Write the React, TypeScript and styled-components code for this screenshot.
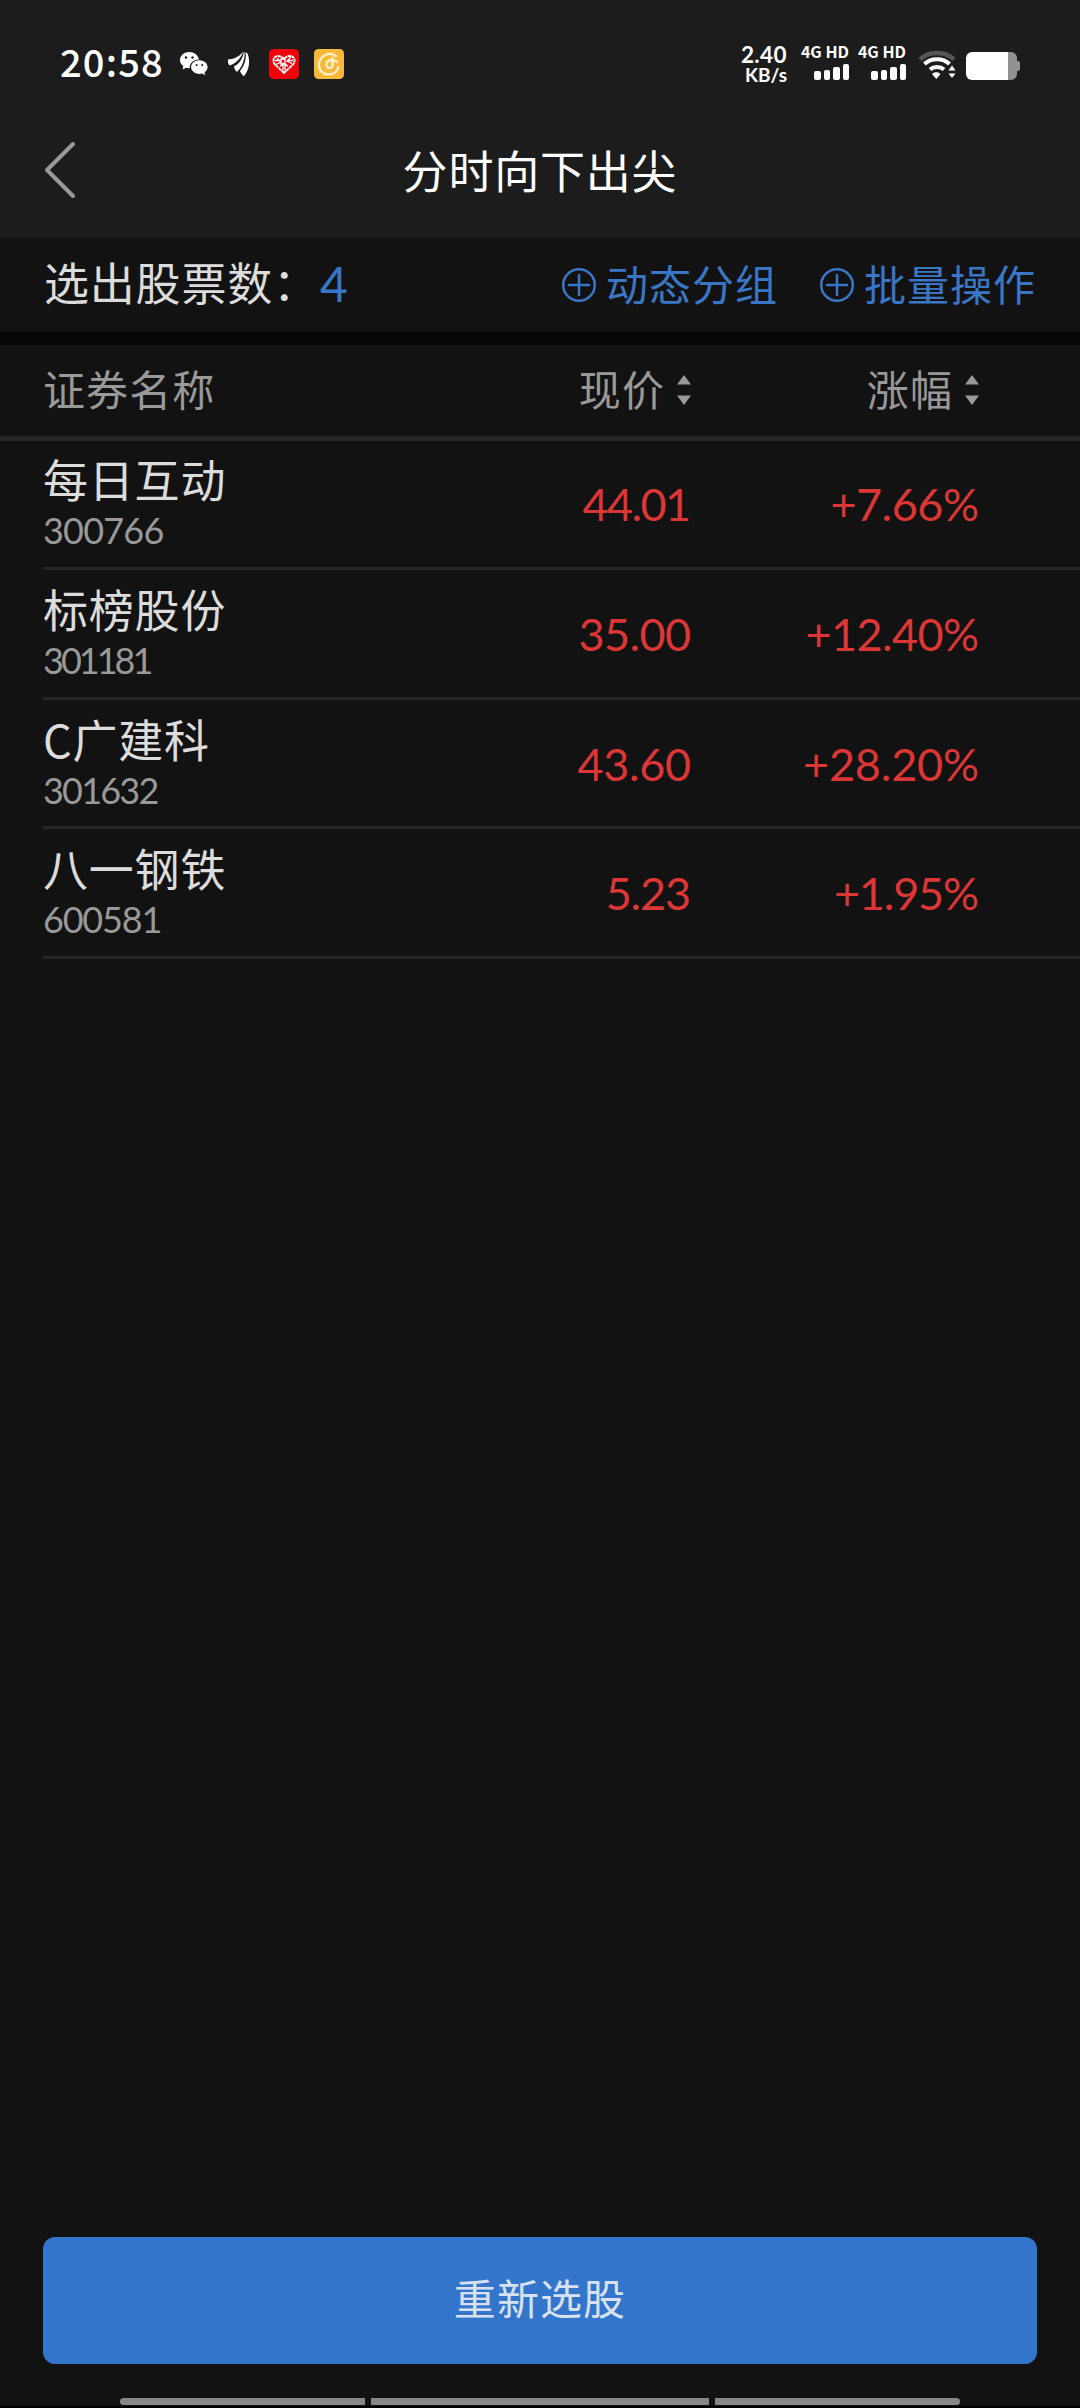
import React from "react";
import styled, { createGlobalStyle } from "styled-components";

const cjk = `"Noto Sans CJK SC", "Noto Sans", sans-serif`;
const latin = `Lato, "Noto Sans CJK SC", sans-serif`;

const Global = createGlobalStyle`
  * { box-sizing: border-box; }
  html, body { margin: 0; background: #121212; }
`;

const Screen = styled.div`
  width: 1080px;
  height: 2408px;
  display: flex;
  flex-direction: column;
  overflow: hidden;
  background: #121212;
  border-bottom: 2px solid #000;
  font-family: ${cjk};
  color: #dcdcdc;
`;

const StatusBar = styled.header`
  height: 110px;
  flex: none;
  display: flex;
  justify-content: space-between;
  padding: 0 60px;
  background: #1c1c1c;
  color: #fff;
`;

const StatusGroup = styled.div`
  display: flex;
  align-items: flex-start;
`;

const Clock = styled.div`
  width: 119px;
  padding-top: 38px;
  font-size: 38px;
  line-height: 46px;
  font-weight: 500;
  letter-spacing: 1.2px;
  white-space: nowrap;
`;

const StatusIcon = styled.svg<{ $w: number; $h: number; $top: number; $gap?: number }>`
  display: block;
  flex: none;
  width: ${(p) => p.$w}px;
  height: ${(p) => p.$h}px;
  margin-top: ${(p) => p.$top}px;
  margin-left: ${(p) => p.$gap ?? 0}px;
`;

const Speed = styled.div`
  padding-top: 44px;
  width: 50px;
  display: flex;
  flex-direction: column;
  align-items: flex-end;
  font-family: ${latin};
  font-weight: 700;
`;

const SpeedValue = styled.span`
  font-size: 22.5px;
  line-height: 21px;
  letter-spacing: 0.4px;
`;

const SpeedUnit = styled.span`
  font-size: 19px;
  line-height: 20px;
`;

const Signal = styled.div<{ $gap: number }>`
  display: flex;
  flex-direction: column;
  align-items: flex-end;
  width: 48px;
  margin-left: ${(p) => p.$gap}px;
  padding-top: 43px;
  font-size: 16px;
  line-height: 17px;
  font-weight: 700;
  white-space: nowrap;
`;

const Bars = styled.div`
  display: flex;
  align-items: flex-end;
  gap: 3.2px;
  height: 20px;
`;

const Bar = styled.i<{ $h: number }>`
  width: 6.3px;
  height: ${(p) => p.$h}px;
  border-radius: 2px;
  background: #fff;
`;

const TitleBar = styled.div`
  height: 128px;
  flex: none;
  display: grid;
  grid-template-columns: 120px 1fr 120px;
  background: #1c1c1c;
`;

const BackButton = styled.button`
  padding: 30px 0 0 43px;
  border: 0;
  background: none;
  display: flex;
  align-items: flex-start;
`;

const Title = styled.h1`
  margin: 0;
  padding-top: 27px;
  text-align: center;
  font-size: 45px;
  line-height: 66px;
  font-weight: 400;
  letter-spacing: 0.8px;
  color: #fff;
`;

const Summary = styled.section`
  height: 107px;
  flex: none;
  display: flex;
  align-items: flex-start;
  padding: 11px 44px 0 44px;
  border-bottom: 13px solid #070707;
`;

const CountLabel = styled.span`
  font-size: 45px;
  line-height: 66px;
  letter-spacing: 0.8px;
  width: 276px;
  white-space: nowrap;
`;

const Count = styled.span`
  flex: 1;
  font-family: ${latin};
  font-size: 48px;
  line-height: 70px;
  color: #3a76c6;
`;

const Action = styled.button`
  display: flex;
  align-items: center;
  gap: 9px;
  height: 66px;
  margin: 1px 0 0 41px;
  padding: 0;
  border: 0;
  background: none;
  font-family: ${cjk};
  font-size: 42px;
  line-height: 66px;
  letter-spacing: 1px;
  white-space: nowrap;
  color: #3a76c6;

  svg {
    margin-top: 3px;
  }
`;

const columns = `
  display: grid;
  grid-template-columns: 450px 198px 288px;
  padding-left: 43px;
`;

const TableHead = styled.div`
  ${columns}
  height: 96px;
  flex: none;
  border-bottom: 5px solid #262626;
  font-size: 42px;
  line-height: 64px;
  letter-spacing: 1.1px;
  color: #999;
`;

const HeadCell = styled.div<{ $sort?: boolean }>`
  display: flex;
  align-items: center;
  justify-content: ${(p) => (p.$sort ? "flex-end" : "flex-start")};
  gap: 12px;
  height: 86px;

  svg {
    margin-top: 4px;
  }
`;

const Row = styled.div<{ $h: number; $top: number }>`
  ${columns}
  padding-left: 0;
  padding-top: ${(p) => p.$top}px;
  margin-left: 43px;
  height: ${(p) => p.$h}px;
  flex: none;
  border-bottom: 3px solid #262626;
`;

const Stock = styled.div`
  display: flex;
  flex-direction: column;
`;

const Name = styled.span`
  font-size: 45px;
  line-height: 66px;
  letter-spacing: 0.8px;
`;

const Code = styled.span<{ $track: number }>`
  font-family: ${latin};
  font-size: 36px;
  line-height: 36px;
  letter-spacing: ${(p) => p.$track}px;
  color: #999;
`;

const Figure = styled.span<{ $track: number }>`
  text-align: right;
  padding-top: 30px;
  font-family: ${latin};
  font-size: 45px;
  line-height: 56px;
  letter-spacing: ${(p) => p.$track}px;
  margin-right: ${(p) => -p.$track}px;
  color: #dc3636;
`;

const Footer = styled.footer`
  margin-top: auto;
  padding: 0 43px;
`;

const Primary = styled.button`
  display: block;
  width: 994px;
  height: 127px;
  padding: 0 0 8px;
  border: 0;
  border-radius: 12px;
  background: #3375cb;
  color: #d7e1ef;
  font-family: ${cjk};
  font-size: 42px;
  letter-spacing: 1.1px;
`;

const Gestures = styled.div`
  display: grid;
  grid-template-columns: 245px 338px 245px;
  gap: 6px;
  margin: 34px 77px 1px;
`;

const Pill = styled.i<{ $side?: "left" | "right" }>`
  height: 7px;
  background: #878787;
  border-radius: ${(p) => (p.$side === "left" ? "4px 0 0 4px" : p.$side === "right" ? "0 4px 4px 0" : "0")};
`;

const PlusCircle = () => (
  <svg width="36" height="36" viewBox="0 0 36 36" fill="none" stroke="#3a76c6" strokeWidth="2.5">
    <circle cx="18" cy="18" r="15.8" />
    <path d="M8 18h20M18 8v20" strokeLinecap="round" />
  </svg>
);

const SortArrows = () => (
  <svg width="14" height="30" viewBox="0 0 14 30" fill="#999">
    <path d="M7 0 14 9.500H0zM7 30 14 20.500H0z" />
  </svg>
);

const SignalStrength = ({ gap }: { gap: number }) => (
  <Signal $gap={gap}>
    <span>4G HD</span>
    <Bars>
      {[9, 10.5, 13.5, 16.5].map((h) => (
        <Bar key={h} $h={h} />
      ))}
    </Bars>
  </Signal>
);

const stocks = [
  { name: "每日互动", code: "300766", price: "44.01", change: "+7.66%", h: 129, top: 5, ct: -0.8, pt: -1.6, gt: -0.5 },
  { name: "标榜股份", code: "301181", price: "35.00", change: "+12.40%", h: 130, top: 6, ct: -3, pt: -0.6, gt: -0.6 },
  { name: "C广建科", code: "301632", price: "43.60", change: "+28.20%", h: 129, top: 6, ct: -1.8, pt: -0.4, gt: -0.2 },
  { name: "八一钢铁", code: "600581", price: "5.23", change: "+1.95%", h: 130, top: 6, ct: -1.2, pt: -1.2, gt: -1.2 },
];

export default function App() {
  return (
    <>
      <Global />
      <Screen>
        <StatusBar>
          <StatusGroup>
            <Clock>20:58</Clock>
            <StatusIcon $w={30} $h={26} $top={51} viewBox="0 0 30 26">
              <path fill="#fff" d="M10.500 1C5.200 1 1 4.500 1 9c0 2.500 1.300 4.600 3.300 6.100L3.600 18.500l3.600-1.800c1.100.3 2.400.5 3.600.4-.5-4.900 3.500-8.700 9.200-8.700C19 4.100 15.200 1 10.500 1z" />
              <path fill="#fff" d="M20.300 9.200c-4.700 0-8.200 3-8.200 6.800s3.500 6.900 8.200 6.900c1 0 2-.2 2.900-.4l3.100 1.700-.8-2.800c1.900-1.300 3.100-3.200 3.100-5.400 0-3.800-3.600-6.800-8.300-6.800z" />
              <g fill="#1c1c1c"><circle cx="7" cy="6.500" r="1.200" /><circle cx="13.500" cy="6.500" r="1.200" /><circle cx="17.600" cy="14" r="1" /><circle cx="23.200" cy="14" r="1" /></g>
            </StatusIcon>
            <StatusIcon $w={24} $h={26} $top={51} $gap={18} viewBox="0 0 24 26" fill="#fff">
              <path d="M1 8.500C6 8.500 12 6 16 .8 14.500 7 8 13.500 2.300 14.500 1.200 13 .8 10.500 1 8.500z" />
              <path d="M16.800 1C16 8 11 13.500 7 15.500c.3 2 1.200 4 3 5.500C15 16 18 9 17.600 1.200z" />
              <path d="M18.500 1.500c1 6-.5 12.500-5.500 18.500.8 2 2.200 4 4 5.200 5.500-7 6.500-16 3.300-23.200z" />
            </StatusIcon>
            <StatusIcon $w={30} $h={30} $top={49} $gap={18} viewBox="0 0 30 30">
              <rect width="30" height="30" rx="4.500" fill="#f00008" />
              <path d="M15 24 6 15.500C2.800 11.800 4.800 7 9 7c2.500 0 4.500 1.200 6 3 1.500-1.800 3.500-3 6-3 4.200 0 6.200 4.800 3 8.500z" fill="none" stroke="#fff" strokeWidth="1.900" strokeDasharray="3.400 .5" />
              <path d="m8 9 4 4-5 2.500m4 2 3-3v7m2 0v-7l3 3m-7-5.500v-2h4v5h-4zm10-4-4 4 5 2.500M6 11.500h4.500m9 0H24" fill="none" stroke="#fff" strokeWidth="1.300" />
            </StatusIcon>
            <StatusIcon $w={30} $h={30} $top={49} $gap={15} viewBox="0 0 30 30">
              <rect width="30" height="30" rx="4.500" fill="#fbb93c" />
              <path d="M22 7.200C19.500 4.800 15.500 4.400 12 5.800 7.800 7.500 5 11.500 5 16c0 5.600 4 9.500 9.300 9.500 5 0 8.800-2.800 10.200-7.500M18.300 8.500c-.2 3 .9 5.200.3 7.600-.5 2-2.200 3-3.900 2.700-1.900-.4-2.800-2.300-2.200-4.300.8-2.600 3.700-3.700 6.700-3.300 1.600.2 2.800.9 3.800 2" fill="none" stroke="#fff4d0" strokeWidth="2.200" strokeLinecap="round" />
            </StatusIcon>
          </StatusGroup>
          <StatusGroup>
            <Speed>
              <SpeedValue>2.40</SpeedValue>
              <SpeedUnit>KB/s</SpeedUnit>
            </Speed>
            <SignalStrength gap={14} />
            <SignalStrength gap={9} />
            <StatusIcon $w={38} $h={30} $top={50} $gap={12} viewBox="0 0 38 30">
              <path d="M2 9.500C11 .8 27 .8 36 9.500" fill="none" stroke="#555" strokeWidth="4.500" />
              <path d="M6.500 14C13 7.500 25 7.500 31.500 14M12 19.500c4-3.500 10-3.500 14 0" fill="none" stroke="#fff" strokeWidth="4" />
              <path d="M14 24c2-2.300 6.500-2.300 8.500 0L18.300 29zM34 15.500l3.500 5h-7zM34 28l3.500-4.500h-7z" fill="#fff" />
            </StatusIcon>
            <StatusIcon $w={54} $h={28} $top={52} $gap={10} viewBox="0 0 54 28">
              <path d="M42 0h3a6 6 0 0 1 6 6v3h1a2 2 0 0 1 2 2v6a2 2 0 0 1-2 2h-1v3a6 6 0 0 1-6 6h-3z" fill="#929292" />
              <path d="M6 0h36v28H6a6 6 0 0 1-6-6V6a6 6 0 0 1 6-6z" fill="#fff" />
            </StatusIcon>
          </StatusGroup>
        </StatusBar>

        <TitleBar>
          <BackButton aria-label="返回">
            <svg width="33" height="60" viewBox="0 0 33 60" fill="none" stroke="#999" strokeWidth="4" strokeLinecap="round" strokeLinejoin="round">
              <path d="M30 4 4 30l26 26" />
            </svg>
          </BackButton>
          <Title>分时向下出尖</Title>
        </TitleBar>

        <Summary>
          <CountLabel>选出股票数：</CountLabel>
          <Count>4</Count>
          <Action><PlusCircle />动态分组</Action>
          <Action><PlusCircle />批量操作</Action>
        </Summary>

        <TableHead>
          <HeadCell>证券名称</HeadCell>
          <HeadCell $sort>现价<SortArrows /></HeadCell>
          <HeadCell $sort>涨幅<SortArrows /></HeadCell>
        </TableHead>
        {stocks.map((s) => (
          <Row key={s.code} $h={s.h} $top={s.top}>
            <Stock>
              <Name>{s.name}</Name>
              <Code $track={s.ct}>{s.code}</Code>
            </Stock>
            <Figure $track={s.pt}>{s.price}</Figure>
            <Figure $track={s.gt}>{s.change}</Figure>
          </Row>
        ))}

        <Footer>
          <Primary>重新选股</Primary>
          <Gestures>
            <Pill $side="left" />
            <Pill />
            <Pill $side="right" />
          </Gestures>
        </Footer>
      </Screen>
    </>
  );
}
